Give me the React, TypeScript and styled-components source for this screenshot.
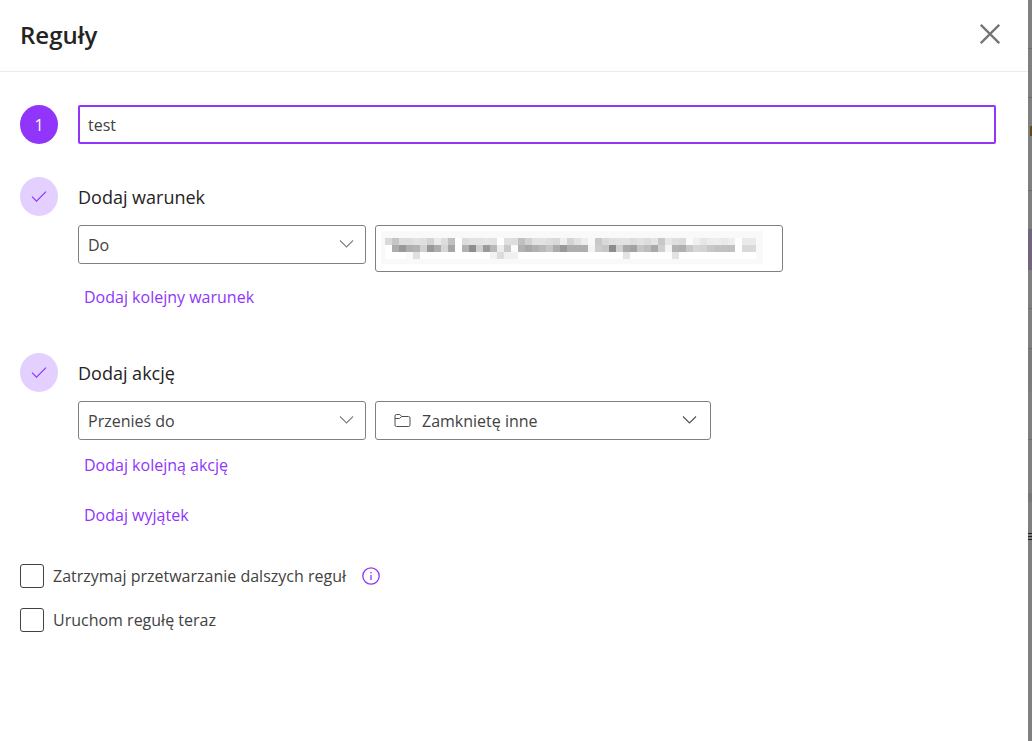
import React, { useState } from "react";
import styled, { createGlobalStyle } from "styled-components";

const GlobalStyle = createGlobalStyle`
  *, *::before, *::after { box-sizing: border-box; }
  body {
    margin: 0;
    background: #ffffff;
    color: #424242;
    font-family: "Open Sans", "Noto Sans", sans-serif;
    font-size: 16px;
    line-height: 24px;
  }
  input, select, button { font: inherit; color: inherit; }
`;

const accent = "#9135fb";

const Page = styled.div`
  display: flex;
  min-height: 100vh;
`;

const Panel = styled.main`
  flex: 1;
  min-width: 0;
`;

const Backdrop = styled.div`
  display: flex;
  flex-direction: column;
  width: 4px;
  background: #808080;
  overflow: hidden;
`;

const Strip = styled.div<{ $size: number; $fill?: string; $line?: boolean }>`
  flex: none;
  height: ${(p) => p.$size}px;
  background: ${(p) => p.$fill ?? "#808080"};
  border-bottom: ${(p) => (p.$line ? "1px solid #6c6c6c" : "none")};
`;

const Marker = styled.div`
  flex: none;
  width: 2px;
  height: 10px;
  margin: 28px 0 24px auto;
  background: #5f4a1c;
`;

const Glyph = styled.svg`
  display: block;
  flex: none;
`;

const Header = styled.header`
  display: flex;
  align-items: flex-start;
  justify-content: space-between;
  height: 72px;
  padding: 18px 24px 0 20px;
  border-bottom: 1px solid #ebebeb;
`;

const Title = styled.h1`
  margin: 0;
  color: #242424;
  font-size: 24px;
  line-height: 34px;
  font-weight: 600;
`;

const CloseButton = styled.button`
  display: grid;
  place-items: center;
  width: 28px;
  height: 32px;
  padding: 0;
  border: 0;
  background: none;
  color: #757575;
`;

const Form = styled.form`
  padding: 33px 32px 32px 20px;
`;

const Step = styled.section<{ $gap: number }>`
  display: flex;
  gap: 20px;
  margin-bottom: ${(p) => p.$gap}px;
`;

const Badge = styled.div<{ $done?: boolean }>`
  display: grid;
  place-items: center;
  flex: none;
  width: 38px;
  height: 39px;
  border-radius: 50%;
  background: ${(p) => (p.$done ? "#e3d0ff" : accent)};
  color: ${(p) => (p.$done ? accent : "#ffffff")};
`;

const StepBody = styled.div`
  flex: 1;
  min-width: 0;
`;

const NameInput = styled.input`
  display: block;
  width: 100%;
  height: 39px;
  padding: 0 8px;
  border: 2px solid ${accent};
  border-radius: 2px;
  outline: none;
  background: #ffffff;
`;

const StepTitle = styled.h2`
  margin: 0 0 8px;
  color: #242424;
  font-size: 18px;
  line-height: 40px;
  font-weight: 400;
`;

const Fields = styled.div`
  display: flex;
  align-items: flex-start;
  gap: 9px;
`;

const SelectBox = styled.div<{ $width: number; $muted?: boolean }>`
  position: relative;
  width: ${(p) => p.$width}px;
  color: ${(p) => (p.$muted ? "#808080" : "#505050")};
`;

const Select = styled.select<{ $inset?: boolean }>`
  display: block;
  appearance: none;
  width: 100%;
  height: 39px;
  padding: 0 40px 0 ${(p) => (p.$inset ? 46 : 9)}px;
  border: 1px solid #808080;
  border-radius: 3px;
  background: #ffffff;
  color: #424242;
`;

const Chevron = styled(Glyph)<{ $inset: number }>`
  position: absolute;
  top: 14px;
  right: ${(p) => p.$inset}px;
  pointer-events: none;
`;

const FolderMark = styled(Glyph)`
  position: absolute;
  top: 12px;
  left: 19px;
  pointer-events: none;
`;

const Recipient = styled.div`
  width: 408px;
  height: 47px;
  padding: 5px;
  border: 1px solid #808080;
  border-radius: 3px;
`;

const LinkList = styled.div`
  display: flex;
  flex-direction: column;
  align-items: flex-start;
  gap: 26px;
  margin-top: 13px;
  padding-left: 6px;
`;

const LinkButton = styled.button`
  padding: 0;
  border: 0;
  background: none;
  color: ${accent};
`;

const Options = styled.div`
  display: flex;
  flex-direction: column;
  gap: 20px;
`;

const OptionRow = styled.div`
  display: flex;
  align-items: center;
  gap: 16px;
`;

const Option = styled.label`
  display: flex;
  align-items: center;
  gap: 9px;
`;

const Checkbox = styled.input`
  appearance: none;
  width: 24px;
  height: 24px;
  margin: 0;
  border: 1px solid #424242;
  border-radius: 3px;
  background: #ffffff;
  &:checked { background: ${accent}; border-color: ${accent}; }
`;

const InfoButton = styled.button`
  padding: 0;
  border: 0;
  background: none;
  color: ${accent};
`;

// Grey levels of the redacted recipient, one two-digit hex value per mosaic tile.
const mosaic = [
  "d9c6dddde2dfd3ebddc1ffdce2e2e5e2ffdfddc0d2e2e2ddd9eed4e2edf9c8d9e0e2e2dce2dce4c8e6dfdafaf0e6eceee9eeffeaea",
  "ffad99aeb3d299add6a6ffb28ecf99b8ecc9fab2a8b1b9c5ac99aeaeaef4cdc68cd0a9a2c5bda9cff4b3b0c8d6d3c8c2c2c0ffd9d9",
  "fffffffbe0fffffffffffffffffffff2dcf0f0ffffffffffffffffffffffffffffffe3ffffffffffffe3ffffffffffffffffffffff",
];

function RedactedText() {
  return (
    <Glyph width="382" height="33" role="img" aria-label="Odbiorca" shapeRendering="crispEdges">
      <rect width="382" height="33" fill="#f9f9f9" />
      <rect x="4" y="7" width="371" height="21" fill="#ffffff" />
      {mosaic.map((line, row) =>
        (line.match(/../g) ?? []).map((tone, col) => (
          <rect
            key={`${row}-${col}`}
            x={4 + col * 7}
            y={7 + row * 7}
            width="7"
            height="7"
            fill={`#${tone}${tone}${tone}`}
          />
        ))
      )}
    </Glyph>
  );
}

function ChevronIcon({ inset = 12 }: { inset?: number }) {
  return (
    <Chevron $inset={inset} width="15" height="10" viewBox="0 0 15 10" fill="none" stroke="currentColor" strokeWidth="1.1" aria-hidden="true">
      <path d="M1 1.500 7.500 8 14 1.500" />
    </Chevron>
  );
}

function CheckIcon() {
  return (
    <Glyph width="16" height="12" viewBox="0 0 16 12" fill="none" stroke="currentColor" strokeWidth="1.2" aria-hidden="true">
      <path d="M1 5.700 5.500 10.200 15 .7" />
    </Glyph>
  );
}

export default function App() {
  const [name, setName] = useState("test");
  return (
    <Page>
      <GlobalStyle />
      <Panel>
        <Header>
          <Title>Reguły</Title>
          <CloseButton type="button" aria-label="Zamknij">
            <Glyph width="20" height="20" viewBox="0 0 20 20" fill="none" stroke="currentColor" strokeWidth="2.300">
              <path d="M.8.8 19.200 19.200M19.200.8.8 19.200" />
            </Glyph>
          </CloseButton>
        </Header>
        <Form onSubmit={(e) => e.preventDefault()}>
          <Step $gap={33}>
            <Badge>1</Badge>
            <StepBody>
              <NameInput aria-label="Nazwa reguły" value={name} onChange={(e) => setName(e.target.value)} />
            </StepBody>
          </Step>

          <Step $gap={44}>
            <Badge $done>
              <CheckIcon />
            </Badge>
            <StepBody>
              <StepTitle>Dodaj warunek</StepTitle>
              <Fields>
                <SelectBox $width={288} $muted>
                  <Select aria-label="Warunek">
                    <option>Do</option>
                  </Select>
                  <ChevronIcon />
                </SelectBox>
                <Recipient>
                  <RedactedText />
                </Recipient>
              </Fields>
              <LinkList>
                <LinkButton type="button">Dodaj kolejny warunek</LinkButton>
              </LinkList>
            </StepBody>
          </Step>

          <Step $gap={37}>
            <Badge $done>
              <CheckIcon />
            </Badge>
            <StepBody>
              <StepTitle>Dodaj akcję</StepTitle>
              <Fields>
                <SelectBox $width={288} $muted>
                  <Select aria-label="Akcja">
                    <option>Przenieś do</option>
                  </Select>
                  <ChevronIcon />
                </SelectBox>
                <SelectBox $width={336}>
                  <Select $inset aria-label="Folder">
                    <option>Zamknietę inne</option>
                  </Select>
                  <FolderMark width="17" height="15" viewBox="0 0 17 15" fill="none" stroke="currentColor" aria-hidden="true">
                    <path d="M1 3A1.500 1.500 0 0 1 2.500 1.500H5.800L7.700 3.500H14.500A1.500 1.500 0 0 1 16 5v7A1.500 1.500 0 0 1 14.500 13.500H2.500A1.500 1.500 0 0 1 1 12zM1 5.500H5.400L7.700 3.500" />
                  </FolderMark>
                  <ChevronIcon inset={14} />
                </SelectBox>
              </Fields>
              <LinkList>
                <LinkButton type="button">Dodaj kolejną akcję</LinkButton>
                <LinkButton type="button">Dodaj wyjątek</LinkButton>
              </LinkList>
            </StepBody>
          </Step>

          <Options>
            <OptionRow>
              <Option>
                <Checkbox type="checkbox" />
                Zatrzymaj przetwarzanie dalszych reguł
              </Option>
              <InfoButton type="button" aria-label="Informacje">
                <Glyph width="18" height="18" viewBox="0 0 18 18" fill="none" stroke="currentColor" strokeWidth="1.300">
                  <circle cx="9" cy="9" r="8.200" />
                  <path d="M9 8v5M9 5v1.500" />
                </Glyph>
              </InfoButton>
            </OptionRow>
            <OptionRow>
              <Option>
                <Checkbox type="checkbox" />
                Uruchom regułę teraz
              </Option>
            </OptionRow>
          </Options>
        </Form>
      </Panel>
      <Backdrop aria-hidden="true">
        <Strip $size={49} $line />
        <Strip $size={49} $line />
        <Marker />
        <Strip $size={31} $line />
        <Strip $size={38} />
        <Strip $size={41} $fill="#72667f" />
        <Strip $size={39} $line />
        <Strip $size={40} $line />
        <Strip $size={42} $fill="#7c7c7c" />
        <Strip $size={49} $line />
        <Strip $size={53} />
        <Strip $size={9} $fill="#777777" />
        <Strip $size={31} />
        <Strip $size={1} $fill="#222222" />
        <Strip $size={2} />
        <Strip $size={1} $fill="#222222" />
        <Strip $size={2} />
        <Strip $size={1} $fill="#222222" />
      </Backdrop>
    </Page>
  );
}
